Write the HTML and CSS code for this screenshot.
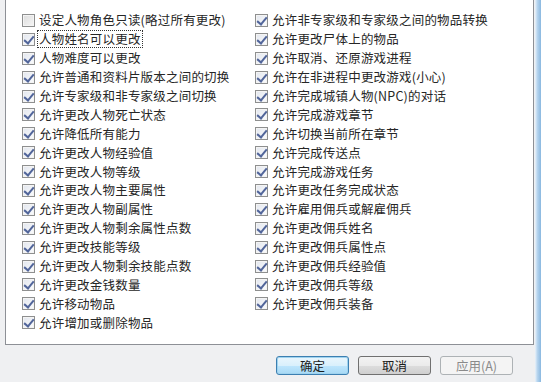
FILE: index.html
```html
<!DOCTYPE html>
<html lang="zh-CN">
<head>
    <meta charset="UTF-8">
    <title>权限设置</title>
    <link rel="stylesheet" href="styles.css">
</head>
<body>
    <div class="window">
        <div class="content">
            <div class="panel">
                <div class="column">
                    <label class="row"><span class="box"></span><span class="text">设定人物角色只读(略过所有更改)</span></label>
                    <label class="row"><span class="box on"></span><span class="text focus">人物姓名可以更改</span></label>
                    <label class="row"><span class="box on"></span><span class="text">人物难度可以更改</span></label>
                    <label class="row"><span class="box on"></span><span class="text">允许普通和资料片版本之间的切换</span></label>
                    <label class="row"><span class="box on"></span><span class="text">允许专家级和非专家级之间切换</span></label>
                    <label class="row"><span class="box on"></span><span class="text">允许更改人物死亡状态</span></label>
                    <label class="row"><span class="box on"></span><span class="text">允许降低所有能力</span></label>
                    <label class="row"><span class="box on"></span><span class="text">允许更改人物经验值</span></label>
                    <label class="row"><span class="box on"></span><span class="text">允许更改人物等级</span></label>
                    <label class="row"><span class="box on"></span><span class="text">允许更改人物主要属性</span></label>
                    <label class="row"><span class="box on"></span><span class="text">允许更改人物副属性</span></label>
                    <label class="row"><span class="box on"></span><span class="text">允许更改人物剩余属性点数</span></label>
                    <label class="row"><span class="box on"></span><span class="text">允许更改技能等级</span></label>
                    <label class="row"><span class="box on"></span><span class="text">允许更改人物剩余技能点数</span></label>
                    <label class="row"><span class="box on"></span><span class="text">允许更改金钱数量</span></label>
                    <label class="row"><span class="box on"></span><span class="text">允许移动物品</span></label>
                    <label class="row"><span class="box on"></span><span class="text">允许增加或删除物品</span></label>
                </div>
                <div class="column">
                    <label class="row"><span class="box on"></span><span class="text">允许非专家级和专家级之间的物品转换</span></label>
                    <label class="row"><span class="box on"></span><span class="text">允许更改尸体上的物品</span></label>
                    <label class="row"><span class="box on"></span><span class="text">允许取消、还原游戏进程</span></label>
                    <label class="row"><span class="box on"></span><span class="text">允许在非进程中更改游戏(小心)</span></label>
                    <label class="row"><span class="box on"></span><span class="text">允许完成城镇人物(NPC)的对话</span></label>
                    <label class="row"><span class="box on"></span><span class="text">允许完成游戏章节</span></label>
                    <label class="row"><span class="box on"></span><span class="text">允许切换当前所在章节</span></label>
                    <label class="row"><span class="box on"></span><span class="text">允许完成传送点</span></label>
                    <label class="row"><span class="box on"></span><span class="text">允许完成游戏任务</span></label>
                    <label class="row"><span class="box on"></span><span class="text">允许更改任务完成状态</span></label>
                    <label class="row"><span class="box on"></span><span class="text">允许雇用佣兵或解雇佣兵</span></label>
                    <label class="row"><span class="box on"></span><span class="text">允许更改佣兵姓名</span></label>
                    <label class="row"><span class="box on"></span><span class="text">允许更改佣兵属性点</span></label>
                    <label class="row"><span class="box on"></span><span class="text">允许更改佣兵经验值</span></label>
                    <label class="row"><span class="box on"></span><span class="text">允许更改佣兵等级</span></label>
                    <label class="row"><span class="box on"></span><span class="text">允许更改佣兵装备</span></label>
                </div>
            </div>
            <div class="buttons">
                <button class="btn default">确定</button>
                <button class="btn">取消</button>
                <button class="btn disabled">应用(A)</button>
            </div>
        </div>
        <div class="frame"></div>
    </div>
</body>
</html>
```

FILE: styles.css
```css
* {
    margin: 0;
    padding: 0;
    box-sizing: border-box;
}
body {
    width: 541px;
    height: 382px;
    overflow: hidden;
    background: #eff0f2;
    font-family: "Noto Sans CJK SC", "Liberation Sans", sans-serif;
    font-size: 12.5px;
    color: #262626;
}
.window {
    display: flex;
    height: 382px;
}
.content {
    width: 535px;
    display: flex;
    flex-direction: column;
}
.panel {
    margin-left: 5px;
    width: 529px;
    height: 346px;
    margin-top: -1px;
    background: #ffffff;
    border: 1px solid #8d9096;
    display: grid;
    grid-template-columns: 233px 1fr;
    padding: 11px 0 0 16px;
}
.row {
    display: flex;
    align-items: center;
    height: 18.9px;
    white-space: nowrap;
}
.box {
    width: 13px;
    height: 13px;
    border: 1px solid #8e8f8f;
    background: linear-gradient(135deg, #dcdcdc, #f6f6f6);
    box-shadow: inset 0 0 0 1px #f4f4f4;
    margin-right: 2px;
    position: relative;
    flex-shrink: 0;
}
.box.on {
    background: linear-gradient(135deg, #e2e6ee, #fbfcfd);
}
.box.on::after {
    content: "";
    position: absolute;
    left: 3px;
    top: 0px;
    width: 4px;
    height: 8px;
    border-right: 2px solid #51659a;
    border-bottom: 2px solid #51659a;
    transform: rotate(40deg);
}
.text {
    letter-spacing: 0.2px;
    line-height: 16px;
    padding: 0 1px;
    border: 1px dotted transparent;
}
.text.focus {
    border-color: #333333;
}
.buttons {
    display: flex;
    justify-content: flex-end;
    gap: 9px;
    padding: 11px 22px 0 0;
}
.btn {
    width: 73px;
    height: 19px;
    font-family: inherit;
    font-size: 12.5px;
    color: #1c1c1c;
    border: 1px solid #707070;
    border-radius: 3px;
    background: linear-gradient(#f3f3f3 0%, #ebebeb 50%, #dddddd 51%, #cfcfcf 100%);
    line-height: 16px;
}
.btn.default {
    border-color: #3c7fb1;
    box-shadow: inset 0 0 0 1px #9fd3ef;
    background: linear-gradient(#eaf6fd 0%, #d9f0fc 50%, #bee6fd 51%, #a7d9f5 100%);
}
.btn.disabled {
    border-color: #adb2b5;
    background: #f4f4f4;
    color: #8a8a8a;
}
.frame {
    width: 6px;
    background: linear-gradient(to right, #e9f2fa, #b6d4ee 40%, #8ab8e0);
}
```
